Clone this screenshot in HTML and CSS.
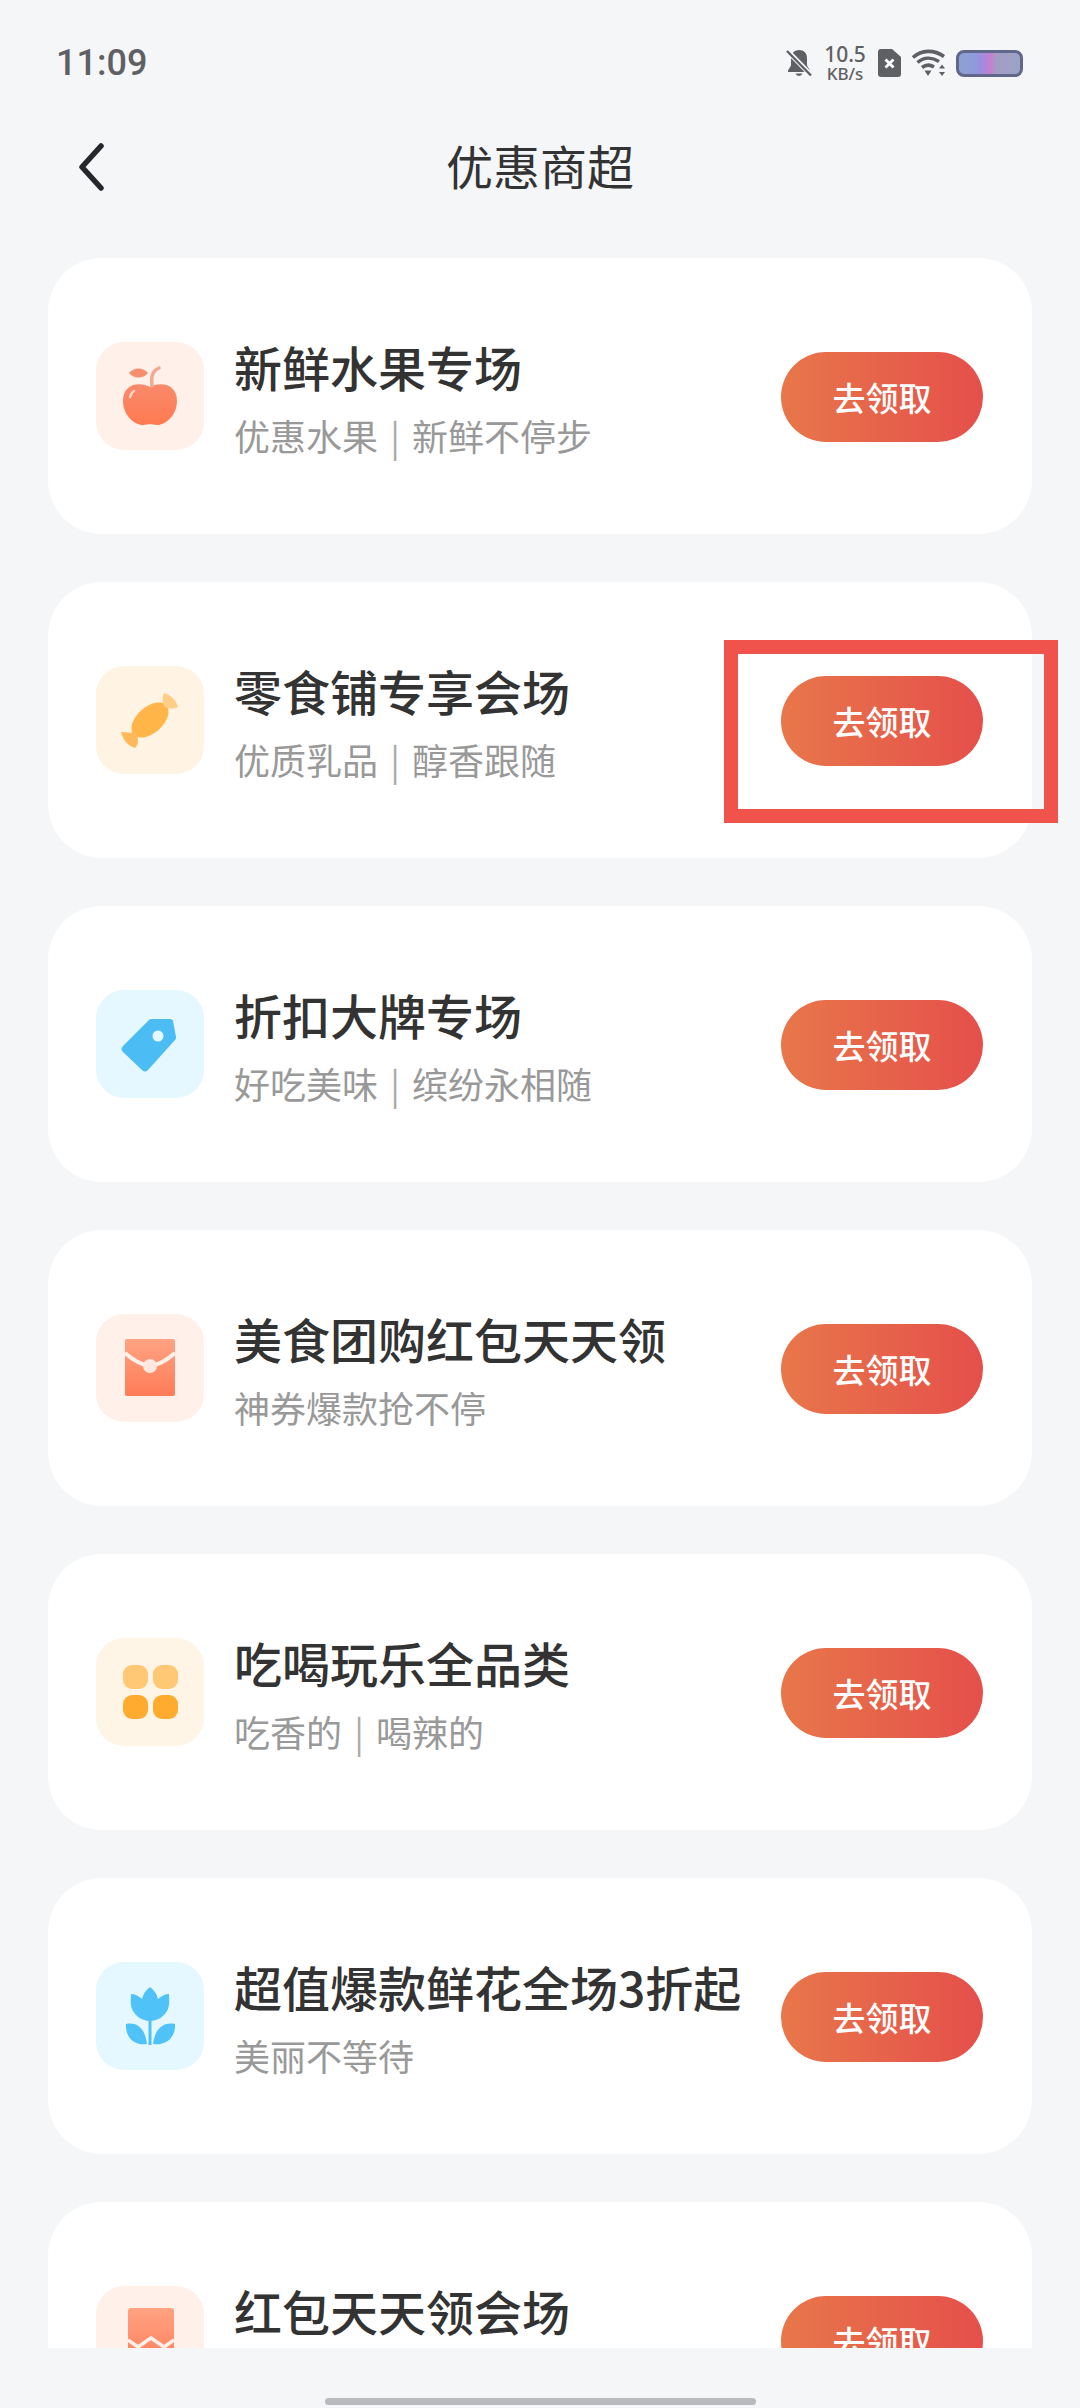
FILE: index.html
```html
<!DOCTYPE html>
<html lang="zh-CN">
<head>
  <meta charset="UTF-8" />
  <title>优惠商超</title>
  <link rel="stylesheet" href="styles.css">
</head>
<body>
  <div class="page">
    <div class="status-bar">
      <span class="time">11:09</span>
      <div class="status-icons">
        <svg class="ic-bell" viewBox="0 0 26 28" width="26" height="28">
          <path d="M13 1c-5 0-8 3.600-8 8.500v7L2 21.500V23h22v-1.500L21 16.500V9c0-4.900-3-8-8-8z" fill="#5f6064"/>
          <path d="M9.500 24.500a3.600 3.200 0 0 0 7 0z" fill="#5f6064"/>
          <path d="M1 1.500 25 26" stroke="#f5f6f8" stroke-width="5"/>
          <path d="M1 2 25 26.500" stroke="#5f6064" stroke-width="2.400"/>
        </svg>
        <div class="speed">
          <span class="speed-num">10.5</span>
          <span class="speed-unit">KB/s</span>
        </div>
        <svg class="ic-sim" viewBox="0 0 23 28" width="23" height="28">
          <path d="M3 0h11l9 8v17a3 3 0 0 1-3 3H3a3 3 0 0 1-3-3V3a3 3 0 0 1 3-3z" fill="#5f6064"/>
          <path d="M7.500 10.500l8 8M15.500 10.500l-8 8" stroke="#fff" stroke-width="2.800"/>
        </svg>
        <svg class="ic-wifi" viewBox="0 0 34 28" width="34" height="28" fill="none" stroke="#5f6064" stroke-width="3.600">
          <path d="M1 8.500C9.500 0.500 22 0.500 32 7.500"/>
          <path d="M5.500 13.500C12 8 20 8 27 12.500"/>
          <path d="M10 18.500C14 15.500 18 15.500 22 18"/>
          <path d="M12.500 21.500h7L16 27z" fill="#5f6064" stroke="none"/>
          <path d="M30 15.500l3 4h-6zM30 27l3-4h-6z" fill="#5f6064" stroke="none"/>
        </svg>
        <div class="battery"></div>
      </div>
    </div>

    <div class="nav-bar">
      <svg class="back" viewBox="0 0 30 48" width="30" height="48" fill="none">
        <path d="M25 3 6 24l19 21" stroke="#26272b" stroke-width="5.500" stroke-linecap="round" stroke-linejoin="round"/>
      </svg>
      <h1 class="nav-title">优惠商超</h1>
    </div>

    <div class="list">
      <div class="card">
        <div class="icon icon-red">
          <svg viewBox="0 0 108 108" width="108" height="108">
            <defs>
              <linearGradient id="gApple" x1="0" y1="0" x2="0" y2="1"><stop offset="0" stop-color="#f98a6c"/><stop offset="1" stop-color="#ff7a50"/></linearGradient>
            </defs>
            <path d="M54 45c-8-5-27-5-27 14 0 14 11 24 20 24 3 0 5-1 7-1s4 1 7 1c9 0 20-10 20-24 0-19-19-19-27-14z" fill="url(#gApple)"/>
            <path d="M56 44c-1-9 0-15 7-18" stroke="#f3a78e" stroke-width="3.500" fill="none" stroke-linecap="round"/>
            <path d="M33 31c5-6 14-6 19 0-5 6-14 6-19 0z" fill="#f58f70"/>
            <path d="M34 55c1-3 2-5 4-6" stroke="#ffd6c8" stroke-width="2.500" fill="none" stroke-linecap="round"/>
          </svg>
        </div>
        <div class="text">
          <div class="title">新鲜水果专场</div>
          <div class="sub">优惠水果<span class="sep">|</span>新鲜不停步</div>
        </div>
        <button class="btn">去领取</button>
      </div>

      <div class="card">
        <div class="icon icon-orange">
          <svg viewBox="0 0 108 108" width="108" height="108">
            <ellipse cx="54" cy="54" rx="22" ry="13" transform="rotate(-42 54 54)" fill="#ffb547"/>
            <path d="M39 67 25 66c2 8 7 14 14 16 4-4 4-10 0-15z" fill="#ffb95a"/>
            <path d="M69 41c-3-4-3-9-1-14 7 2 12 7 14 14-5 2-9 2-13 0z" fill="#ffcd85"/>
          </svg>
        </div>
        <div class="text">
          <div class="title">零食铺专享会场</div>
          <div class="sub">优质乳品<span class="sep">|</span>醇香跟随</div>
        </div>
        <button class="btn">去领取</button>
        <div class="highlight"></div>
      </div>

      <div class="card">
        <div class="icon icon-blue">
          <svg viewBox="0 0 108 108" width="108" height="108">
            <path d="M56 29h18c2 0 3 1 3 2l3 16c0 1 0 2-1 3L52 80c-2 2-4 2-6 0L27 62c-2-2-2-4 0-6L53 30c1-1 2-1 3-1z" fill="#4cbcf5"/>
            <circle cx="62" cy="46" r="5.500" fill="#e5f8ff"/>
          </svg>
        </div>
        <div class="text">
          <div class="title">折扣大牌专场</div>
          <div class="sub">好吃美味<span class="sep">|</span>缤纷永相随</div>
        </div>
        <button class="btn">去领取</button>
      </div>

      <div class="card">
        <div class="icon icon-red">
          <svg viewBox="0 0 108 108" width="108" height="108">
            <defs>
              <linearGradient id="gEnv" x1="0" y1="0" x2="0" y2="1"><stop offset="0" stop-color="#ffa382"/><stop offset="1" stop-color="#ff7b57"/></linearGradient>
            </defs>
            <rect x="29" y="25" width="50" height="57" rx="2" fill="url(#gEnv)"/>
            <path d="M29 39c8 7 17 12 25 13 8-1 17-6 25-13" stroke="#fff0ea" stroke-width="4" fill="none"/>
            <circle cx="54" cy="52" r="7" fill="#ffe9df"/>
          </svg>
        </div>
        <div class="text">
          <div class="title">美食团购红包天天领</div>
          <div class="sub">神券爆款抢不停</div>
        </div>
        <button class="btn">去领取</button>
      </div>

      <div class="card">
        <div class="icon icon-yellow">
          <svg viewBox="0 0 108 108" width="108" height="108">
            <rect x="27" y="27" width="25" height="24" rx="9" fill="#ffc875"/>
            <rect x="57" y="27" width="25" height="24" rx="9" fill="#ffc875"/>
            <rect x="27" y="57" width="25" height="24" rx="9" fill="#ffab30"/>
            <rect x="57" y="57" width="25" height="24" rx="9" fill="#ffab30"/>
          </svg>
        </div>
        <div class="text">
          <div class="title">吃喝玩乐全品类</div>
          <div class="sub">吃香的<span class="sep">|</span>喝辣的</div>
        </div>
        <button class="btn">去领取</button>
      </div>

      <div class="card">
        <div class="icon icon-blue">
          <svg viewBox="0 0 108 108" width="108" height="108">
            <path d="M54 25c-4 3-7 7-8 12-3-3-7-5-11-5 0 4-1 10 1 15 3 7 10 12 18 12s15-5 18-12c2-5 1-11 1-15-4 0-8 2-11 5-1-5-4-9-8-12z" fill="#4fc3f7"/>
            <path d="M54 58v25" stroke="#4fc3f7" stroke-width="3"/>
            <path d="M30 62c10-2 19 3 21 20-11 2-22-5-21-20zM79 62c-10-2-20 3-22 20 11 2 23-5 22-20z" fill="#4fc3f7"/>
          </svg>
        </div>
        <div class="text">
          <div class="title">超值爆款鲜花全场3折起</div>
          <div class="sub">美丽不等待</div>
        </div>
        <button class="btn">去领取</button>
      </div>

      <div class="card">
        <div class="icon icon-red">
          <svg viewBox="0 0 108 108" width="108" height="108">
            <defs>
              <linearGradient id="gEnv2" x1="0" y1="0" x2="0" y2="1"><stop offset="0" stop-color="#ffa382"/><stop offset="1" stop-color="#ff7b57"/></linearGradient>
            </defs>
            <rect x="32" y="22" width="46" height="62" rx="3" fill="url(#gEnv2)"/>
            <path d="M32 54l10 7 13-9 13 9 10-7" stroke="#fff0ea" stroke-width="3.500" fill="none"/>
          </svg>
        </div>
        <div class="text">
          <div class="title">红包天天领会场</div>
          <div class="sub sub-empty"></div>
        </div>
        <button class="btn">去领取</button>
      </div>
    </div>

    <div class="home-area">
      <div class="home-bar"></div>
    </div>
  </div>
</body>
</html>
```

FILE: styles.css
```css
* {
  box-sizing: border-box;
}
body {
  margin: 0;
  background-color: #f5f6f8;
  font-family: "Noto Sans CJK SC", "Noto Sans", sans-serif;
}
.page {
  width: 1080px;
  height: 2408px;
  display: flex;
  flex-direction: column;
  overflow: hidden;
}
.status-bar {
  height: 126px;
  padding: 0 57px 0 56px;
  display: flex;
  align-items: center;
  justify-content: space-between;
  flex-shrink: 0;
}
.time {
  font-family: Roboto, sans-serif;
  font-size: 36px;
  font-weight: 500;
  color: #5f6064;
}
.status-icons {
  display: flex;
  align-items: center;
}
.speed {
  width: 44px;
  margin: 0 11px;
  display: flex;
  flex-direction: column;
  align-items: center;
  color: #5f6064;
  font-family: "Noto Sans", sans-serif;
  font-weight: 500;
}
.speed-num {
  font-size: 21px;
  line-height: 21px;
}
.speed-unit {
  font-size: 17px;
  line-height: 17px;
}
.ic-wifi {
  margin: 0 10px 0 11px;
}
.battery {
  width: 67px;
  height: 27px;
  border: 3px solid #61678a;
  border-radius: 8px;
  background: linear-gradient(90deg, #8e9fd0 0%, #8e9bdc 25%, #9a8fe0 35%, #c47fd0 52%, #a59cc4 60%, #9aa5c6 100%);
}
.nav-bar {
  height: 82px;
  position: relative;
  display: flex;
  align-items: center;
  justify-content: center;
  flex-shrink: 0;
}
.back {
  position: absolute;
  left: 76px;
  top: 17px;
}
.nav-title {
  margin: 0 0 5px;
  font-size: 47px;
  line-height: 64px;
  font-weight: 400;
  color: #333;
}
.list {
  flex: 1;
  padding: 50px 48px 0;
  display: flex;
  flex-direction: column;
  gap: 48px;
  overflow: hidden;
}
.card {
  position: relative;
  height: 276px;
  flex-shrink: 0;
  padding: 0 49px 0 48px;
  display: flex;
  align-items: center;
  background-color: #fff;
  border-radius: 54px;
}
.icon {
  width: 108px;
  height: 108px;
  border-radius: 28px;
  flex-shrink: 0;
}
.icon svg {
  display: block;
}
.icon-red {
  background-color: #fff0ea;
}
.icon-orange {
  background-color: #fff3e3;
}
.icon-yellow {
  background-color: #fff5e6;
}
.icon-blue {
  background-color: #e5f8ff;
}
.text {
  flex: 1;
  margin-left: 30px;
  min-width: 0;
}
.title {
  font-size: 48px;
  line-height: 60px;
  font-weight: 500;
  color: #333;
  white-space: nowrap;
}
.sub {
  margin-top: 17px;
  font-size: 36px;
  line-height: 44px;
  color: #999;
  white-space: nowrap;
}
.sub-empty {
  height: 44px;
}
.sep {
  display: inline-block;
  width: 34px;
  text-align: center;
  color: #aaa;
}
.btn {
  width: 202px;
  height: 90px;
  margin-top: 2px;
  padding: 0;
  border: none;
  border-radius: 45px;
  flex-shrink: 0;
  background: linear-gradient(90deg, #e8774a, #e54f4b);
  color: #fff;
  font-family: inherit;
  font-size: 33px;
  font-weight: 500;
}
.highlight {
  position: absolute;
  left: 676px;
  top: 58px;
  width: 334px;
  height: 183px;
  border: 14px solid #f0524c;
}
.home-area {
  height: 60px;
  padding-top: 50px;
  flex-shrink: 0;
}
.home-bar {
  width: 431px;
  height: 7px;
  margin: 0 auto;
  border-radius: 4px;
  background-color: #b9babd;
}
```
